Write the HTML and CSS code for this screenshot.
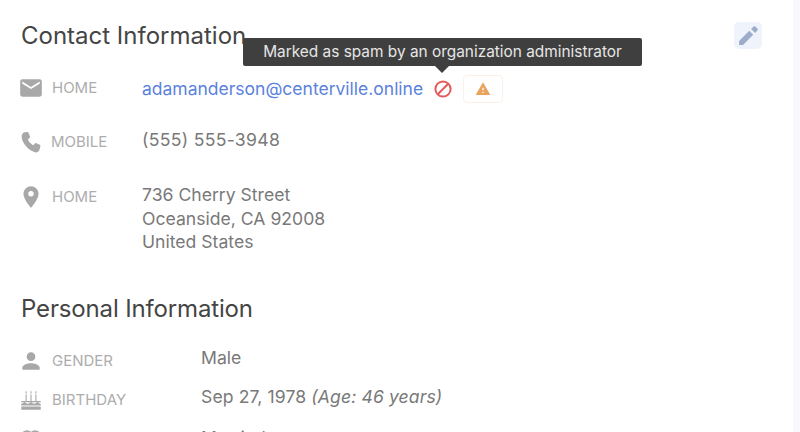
FILE: index.html
```html
<!DOCTYPE html>
<html lang="en">
  <head>
    <meta charset="UTF-8" />
    <title>Contact</title>
    <link rel="stylesheet" href="styles.css">
  </head>
  <body>
    <main class="panel">
      <section class="contact">
        <div class="section-head">
          <h2>Contact Information</h2>
          <button class="edit" type="button" aria-label="Edit">
            <svg viewBox="0 0 24 24" width="25" height="25"><path d="M3 17.250V21h3.750L16.500 11.250l-3.750-3.750L3 17.250zM20.710 7.040a1 1 0 0 0 0-1.410l-2.340-2.340a1 1 0 0 0-1.410 0L14.500 5.750l3.750 3.750 2.460-2.460z"/></svg>
          </button>
        </div>

        <div class="row row-email">
          <div class="label">
            <svg class="icon" viewBox="0 0 24 24" width="26" height="26"><path d="M20 4H4a2 2 0 0 0-2 2v12a2 2 0 0 0 2 2h16a2 2 0 0 0 2-2V6a2 2 0 0 0-2-2zm0 4-8 5-8-5V6l8 5 8-5v2z"/></svg>
            <span>HOME</span>
          </div>
          <div class="value email-value">
            <a href="#">adamanderson@centerville.online</a>
            <span class="spam">
              <svg viewBox="0 0 20 20" width="20" height="20"><circle cx="10" cy="10" r="7.600"/><path d="M4.800 15.200 15.200 4.800"/></svg>
              <span class="tooltip">Marked as spam by an organization administrator</span>
            </span>
            <span class="warn">
              <svg viewBox="0 0 24 24" width="16" height="16"><path d="M1 21h22L12 2 1 21zm12-3h-2v-2h2v2zm0-4h-2v-4h2v4z"/></svg>
            </span>
          </div>
        </div>

        <div class="row row-phone">
          <div class="label">
            <svg class="icon" viewBox="0 0 24 24" width="25" height="25"><path d="M6.500 2.200 9 2c.5 0 .9.300 1.100.7l1.400 3.600c.2.400 0 .9-.3 1.200L9.500 9.200c1 2.200 2.900 4.300 5 5.400l1.800-1.700c.3-.4.800-.5 1.200-.3l3.400 1.600c.4.2.7.600.6 1.100l-.5 2.500c-.5 2.300-1.900 4.200-3.900 3.700C10 20 4 12.500 3.500 7 3.300 4.500 4.500 2.600 6.500 2.200z"/></svg>
            <span>MOBILE</span>
          </div>
          <div class="value phone-value">(555) 555-3948</div>
        </div>

        <div class="row row-address">
          <div class="label">
            <svg class="icon" viewBox="0 0 24 24" width="26" height="26"><path d="M12 2a7 7 0 0 0-7 7c0 5.200 7 13 7 13s7-7.800 7-13a7 7 0 0 0-7-7zm0 9.500a2.500 2.500 0 1 1 0-5 2.500 2.500 0 0 1 0 5z"/></svg>
            <span>HOME</span>
          </div>
          <div class="value">736 Cherry Street<br>Oceanside, CA 92008<br>United States</div>
        </div>
      </section>

      <section class="personal">
        <h2>Personal Information</h2>

        <div class="row row-gender">
          <div class="label">
            <svg class="icon" viewBox="0 0 24 24" width="26" height="26"><path d="M12 12a4 4 0 1 0 0-8 4 4 0 0 0 0 8zm0 2c-2.700 0-8 1.300-8 4v2h16v-2c0-2.700-5.300-4-8-4z"/></svg>
            <span>GENDER</span>
          </div>
          <div class="value">Male</div>
        </div>

        <div class="row row-birthday">
          <div class="label">
            <svg class="icon" viewBox="0 0 24 24" width="26" height="26"><path d="M3 21h18v-3H3v3zm0-4h18v-1.500c-1.500 0-2.200-1.500-3-1.500s-1.500 1.500-3 1.500-2.200-1.500-3-1.500-1.500 1.500-3 1.500-2.200-1.500-3-1.500-1.500 1.500-3 1.500V17zM7 7h1v6H7zM11.500 7h1v6h-1zM16 7h1v6h-1zM3 13h18v1H3zM7 4h1v2H7zM11.500 4h1v2h-1zM16 4h1v2h-1z"/></svg>
            <span>BIRTHDAY</span>
          </div>
          <div class="value birthday-value">Sep 27, 1978 <em>(Age: 46 years)</em></div>
        </div>

        <div class="row row-marital">
          <div class="label">
            <svg class="icon" viewBox="0 2 24 24" width="26" height="26"><path d="M12 21 4 13a5.500 5.500 0 0 1 8-7.500A5.500 5.500 0 0 1 20 13l-8 8z"/></svg>
            <span>MARITAL STATUS</span>
          </div>
          <div class="value">Married</div>
        </div>
      </section>
    </main>
    <div class="strip"></div>
  </body>
</html>
```

FILE: styles.css
```css
html,
body {
  height: 100%;
}

body {
  margin: 0;
  display: flex;
  overflow: hidden;
  background-color: #ffffff;
  font-family: Inter, "Liberation Sans", sans-serif;
  color: #797979;
}

.panel {
  flex: 1;
  padding: 20px 31px 0 21px;
}

.strip {
  width: 7px;
  background-color: #f8f8fe;
}

h2 {
  margin: 0;
  font-size: 24px;
  font-weight: 400;
  line-height: 32px;
  color: #454545;
}

.personal h2 {
  letter-spacing: -0.15px;
}

.section-head {
  display: flex;
  justify-content: space-between;
  align-items: flex-start;
}

.edit {
  display: flex;
  align-items: center;
  justify-content: center;
  width: 28px;
  height: 27px;
  margin-top: 2px;
  padding: 0;
  border: none;
  border-radius: 5px;
  background-color: #eef3fc;
}

.edit svg {
  fill: #9dadc9;
}

.row {
  display: grid;
  grid-template-columns: 121px 1fr;
  align-items: start;
}

.contact .row-email {
  margin-top: 23px;
}

.contact .row-phone {
  margin-top: 26px;
}

.contact .row-address {
  margin-top: 29px;
}

.personal {
  margin-top: 39px;
}

.personal .row {
  grid-template-columns: 180px 1fr;
}

.personal .row-gender {
  margin-top: 23px;
}

.personal .row-birthday {
  margin-top: 13px;
}

.personal .row-marital {
  margin-top: 15px;
}

.label {
  display: flex;
  align-items: center;
  gap: 8px;
  margin-left: -3px;
  font-size: 15px;
  line-height: 26px;
  color: #adadad;
}

.icon {
  flex: none;
  fill: #a8a8a8;
}

.value {
  margin-top: -1px;
  font-size: 17.6px;
  line-height: 23.5px;
}

.personal .value {
  margin-top: -2px;
}

.phone-value {
  letter-spacing: 0.3px;
}

.birthday-value {
  letter-spacing: 0.1px;
}

.value em {
  font-style: italic;
}

.email-value {
  display: flex;
  align-items: center;
  gap: 10px;
  margin-top: 0;
  font-size: 17.5px;
}

.email-value a {
  color: #5b82dc;
  text-decoration: none;
}

.spam {
  position: relative;
  display: flex;
}

.spam svg {
  fill: none;
  stroke: #e25c5c;
  stroke-width: 2;
}

.tooltip {
  position: absolute;
  left: -190px;
  bottom: 33px;
  padding: 0 20px;
  border-radius: 2px;
  background-color: #3f3f3f;
  font-size: 15.4px;
  line-height: 28px;
  white-space: nowrap;
  color: #e6e6e6;
}

.tooltip::after {
  content: "";
  position: absolute;
  left: 192px;
  bottom: -7px;
  border-left: 7px solid transparent;
  border-right: 7px solid transparent;
  border-top: 7px solid #3f3f3f;
}

.warn {
  display: flex;
  align-items: center;
  justify-content: center;
  width: 38px;
  height: 26px;
  border: 1px solid #fbf1e6;
  border-radius: 4px;
}

.warn svg {
  fill: #eaa35f;
}
```
